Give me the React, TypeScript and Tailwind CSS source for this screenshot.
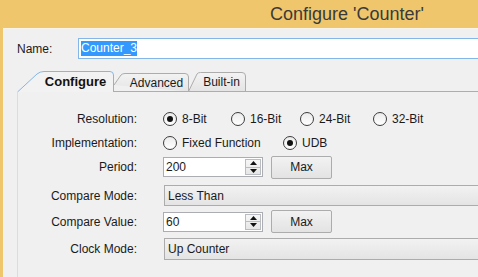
import React from "react";

function Radio({ checked, label, className }: { checked?: boolean; label: string; className?: string }) {
  return (
    <div className={"flex items-center " + (className ?? "")}>
      <span className="w-[14px] h-[14px] rounded-full border border-[#3c3c3c] bg-gradient-to-b from-[#ececec] to-white flex items-center justify-center shrink-0">
        {checked && <span className="w-[6px] h-[6px] rounded-full bg-[#111]" />}
      </span>
      <span className="ml-[5px]">{label}</span>
    </div>
  );
}

function Label({ children }: { children: React.ReactNode }) {
  return <div className="w-[119px] text-right shrink-0">{children}</div>;
}

function Spin() {
  return (
    <div className="w-[16px] h-full border border-[#b9bcc2] bg-gradient-to-b from-[#f7f7f7] to-[#e6e6e6] flex flex-col">
      <div className="flex-1 flex items-center justify-center border-b border-[#b9bcc2]">
        <svg width="7" height="4" viewBox="0 0 7 4"><path d="M0 4 L3.5 0 L7 4 Z" fill="#111" /></svg>
      </div>
      <div className="flex-1 flex items-center justify-center">
        <svg width="7" height="4" viewBox="0 0 7 4"><path d="M0 0 L3.5 4 L7 0 Z" fill="#111" /></svg>
      </div>
    </div>
  );
}

function NumInput({ value }: { value: string }) {
  return (
    <div className="w-[100px] h-[20px] border border-[#abadb3] bg-white flex items-stretch p-[1px]">
      <div className="flex-1 flex items-center pl-[1px]">{value}</div>
      <Spin />
    </div>
  );
}

function MaxButton() {
  return (
    <div className="ml-[8px] w-[61px] h-[23px] border border-[#acacac] rounded-[2px] bg-gradient-to-b from-[#f2f2f2] to-[#e3e3e3] flex items-center justify-center">
      Max
    </div>
  );
}

function Dropdown({ value }: { value: string }) {
  return (
    <div className="w-[400px] h-full border border-[#acacac] bg-gradient-to-b from-[#f2f2f2] to-[#e4e4e4] flex items-center pl-[3px] shrink-0">
      {value}
    </div>
  );
}

export default function App() {
  return (
    <div className="w-[478px] h-[277px] overflow-hidden bg-[#efc66c] flex flex-col font-['Liberation_Sans',Arial,sans-serif] text-[12px] text-[#1a1a1a]">
      <div className="h-[28px] shrink-0 flex items-center pl-[270px] text-[18px] text-[#3a3a3a] whitespace-nowrap">
        Configure 'Counter'
      </div>
      <div className="flex-1 ml-[3px] bg-[#f0f0f0] border-l border-t border-[#f8f4ea] flex flex-col min-w-0">
        {/* Name row */}
        <div className="mt-[9px] h-[21px] pl-[13px] flex items-center shrink-0">
          <div className="w-[61px] shrink-0">Name:</div>
          <div className="w-[420px] shrink-0 h-[21px] border border-[#84b6e8] bg-white flex items-center pl-[2px]">
            <span className="bg-[#3399ff] text-white leading-[15px]">Counter_3</span>
          </div>
        </div>
        {/* Tabs */}
        <div className="mt-[12px] h-[21px] pl-[13px] flex items-end shrink-0">
          <div className="relative w-[97px] h-[21px] shrink-0 flex items-center justify-center pl-[22px] pr-[2px]">
            <svg className="absolute inset-0" width="97" height="21" viewBox="0 0 97 21">
              <path d="M0.5 21 L20 3 Q23 0.5 27 0.5 L93 0.5 Q96.5 0.5 96.5 4 L96.5 21" fill="#f2f2f2" stroke="#84b6e8" />
            </svg>
            <span className="relative font-bold text-[13px] text-[#111]">Configure</span>
          </div>
          <div className="relative w-[75px] h-[19px] shrink-0 flex items-center justify-center pl-[10px]">
            <svg className="absolute inset-0" width="75" height="19" viewBox="0 0 75 19">
              <defs>
                <linearGradient id="g1" x1="0" y1="0" x2="0" y2="1">
                  <stop offset="0" stopColor="#f3f3f3" />
                  <stop offset="1" stopColor="#e4e4e4" />
                </linearGradient>
              </defs>
              <path d="M0 12 L7 2 Q8.5 0.5 11 0.5 L71 0.5 Q74.5 0.5 74.5 4 L74.5 18.5" fill="url(#g1)" stroke="#acacac" />
              <line x1="0" y1="18.5" x2="75" y2="18.5" stroke="#84b6e8" />
            </svg>
            <span className="relative">Advanced</span>
          </div>
          <div className="relative w-[58px] h-[20px] shrink-0 -ml-[1px] flex items-center justify-center pl-[9px]">
            <svg className="absolute inset-0" width="58" height="20" viewBox="0 0 58 20">
              <defs>
                <linearGradient id="g2" x1="0" y1="0" x2="0" y2="1">
                  <stop offset="0" stopColor="#f3f3f3" />
                  <stop offset="1" stopColor="#e4e4e4" />
                </linearGradient>
              </defs>
              <path d="M0.5 19.5 L9 2 Q10 0.5 12.5 0.5 L54 0.5 Q57.5 0.5 57.5 4 L57.5 19.5" fill="url(#g2)" stroke="#acacac" />
              <line x1="0" y1="19.5" x2="58" y2="19.5" stroke="#84b6e8" />
            </svg>
            <span className="relative">Built-in</span>
          </div>
          <div className="flex-1 h-full border-b border-[#84b6e8]" />
        </div>
        {/* Panel */}
        <div className="flex-1 ml-[13px] border-l border-[#dcdcdc] pt-[15px] flex flex-col">
          <div className="h-[24px] flex items-center shrink-0">
            <Label>Resolution:</Label>
            <div className="ml-[26px] flex items-center shrink-0">
              <Radio checked label="8-Bit" className="w-[68px]" />
              <Radio label="16-Bit" className="w-[69px]" />
              <Radio label="24-Bit" className="w-[73px]" />
              <Radio label="32-Bit" />
            </div>
          </div>
          <div className="h-[24px] flex items-center shrink-0">
            <Label>Implementation:</Label>
            <div className="ml-[26px] flex items-center shrink-0">
              <Radio label="Fixed Function" className="w-[120px]" />
              <Radio checked label="UDB" />
            </div>
          </div>
          <div className="h-[24px] flex items-center shrink-0">
            <Label>Period:</Label>
            <div className="ml-[26px] flex items-center shrink-0">
              <NumInput value="200" />
              <MaxButton />
            </div>
          </div>
          <div className="mt-[6px] h-[21px] flex items-center shrink-0">
            <Label>Compare Mode:</Label>
            <div className="ml-[27px] h-full flex shrink-0">
              <Dropdown value="Less Than" />
            </div>
          </div>
          <div className="mt-[4px] h-[23px] flex items-center shrink-0">
            <Label>Compare Value:</Label>
            <div className="ml-[26px] flex items-center shrink-0">
              <NumInput value="60" />
              <MaxButton />
            </div>
          </div>
          <div className="mt-[5px] h-[22px] flex items-center shrink-0">
            <Label>Clock Mode:</Label>
            <div className="ml-[27px] h-full flex shrink-0">
              <Dropdown value="Up Counter" />
            </div>
          </div>
        </div>
      </div>
    </div>
  );
}
